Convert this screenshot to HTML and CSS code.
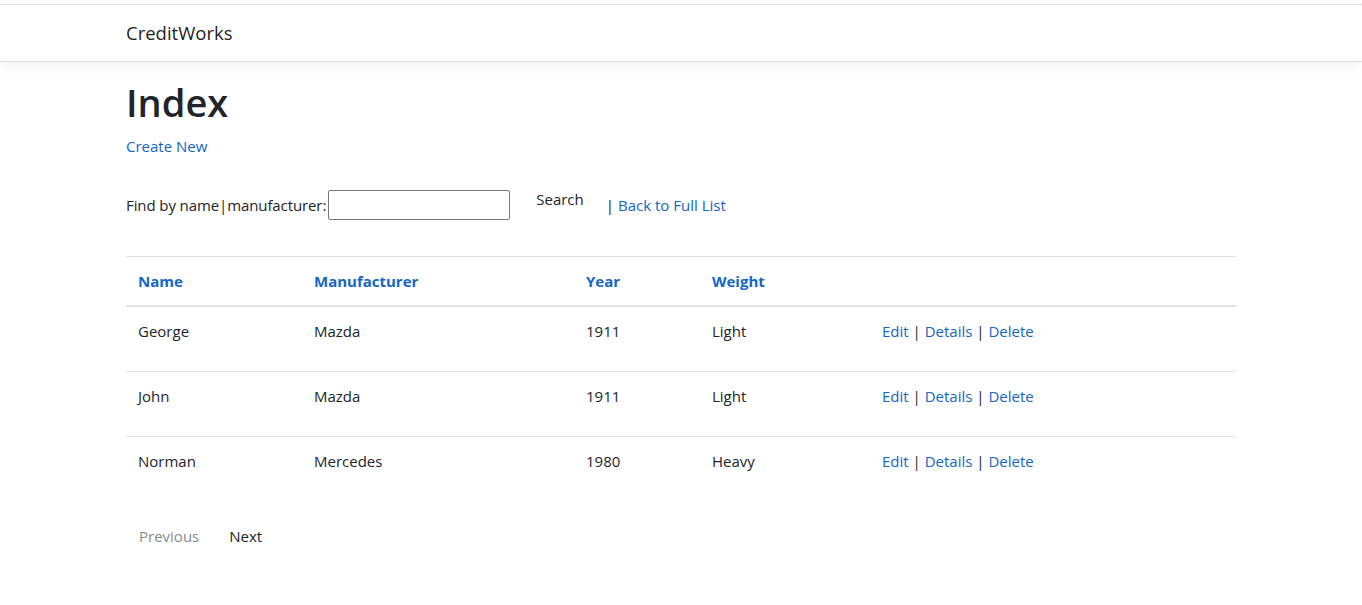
FILE: index.html
```html
<!DOCTYPE html>
<html lang="en">
<head>
<meta charset="utf-8">
<title>Index - CreditWorks</title>
<link rel="stylesheet" href="styles.css">
</head>
<body>
<header class="site-header">
  <nav class="navbar">
    <div class="container">
      <a class="brand" href="#">CreditWorks</a>
    </div>
  </nav>
</header>
<main class="container page">
  <h1 class="title">Index</h1>
  <p class="create"><a href="#">Create New</a></p>
  <form class="search">
    <span class="label">Find by name|manufacturer:</span>
    <input class="search-input" type="text">
    <button type="button" class="btn search-btn">Search</button>
    <span class="sep">|</span>
    <a href="#">Back to Full List</a>
  </form>
  <table class="table">
    <thead>
      <tr>
        <th class="c-name"><a href="#">Name</a></th>
        <th class="c-man"><a href="#">Manufacturer</a></th>
        <th class="c-year"><a href="#">Year</a></th>
        <th class="c-weight"><a href="#">Weight</a></th>
        <th class="c-act"></th>
      </tr>
    </thead>
    <tbody>
      <tr>
        <td>George</td><td>Mazda</td><td>1911</td><td>Light</td>
        <td><a href="#">Edit</a> | <a href="#">Details</a> | <a href="#">Delete</a></td>
      </tr>
      <tr>
        <td>John</td><td>Mazda</td><td>1911</td><td>Light</td>
        <td><a href="#">Edit</a> | <a href="#">Details</a> | <a href="#">Delete</a></td>
      </tr>
      <tr>
        <td>Norman</td><td>Mercedes</td><td>1980</td><td>Heavy</td>
        <td><a href="#">Edit</a> | <a href="#">Details</a> | <a href="#">Delete</a></td>
      </tr>
    </tbody>
  </table>
  <div class="pager">
    <a class="btn disabled" href="#">Previous</a>
    <a class="btn" href="#">Next</a>
  </div>
</main>
</body>
</html>
```
FILE: styles.css
```css
html, body {
  margin: 0;
  padding: 0;
}
body {
  font-family: "Open Sans", "Noto Sans", sans-serif;
  font-size: 15px;
  line-height: 24px;
  color: #212529;
  background: #fff;
}
a {
  color: #1466c8;
  text-decoration: none;
}
.container {
  width: 1110px;
  margin: 0 auto;
}
.site-header {
  margin-top: 4px;
  border-top: 1px solid #dee2e6;
}
.navbar {
  background: #fff;
  border-bottom: 1px solid #dee2e6;
  box-shadow: 0 4px 12px rgba(0, 0, 0, 0.05);
  padding: 8px 0;
}
.brand {
  display: inline-block;
  padding: 5px 0;
  font-size: 18.5px;
  line-height: 30px;
  color: rgba(0, 0, 0, 0.9);
}
.page {
  padding-top: 16px;
}
.title {
  margin: 0 0 8px;
  font-size: 38px;
  line-height: 48px;
  font-weight: 600;
}
.create {
  margin: 0 0 28px;
}
.search {
  display: flex;
  align-items: center;
  height: 38px;
  margin: 0 0 32px;
}
.label {
  margin-right: 2px;
  letter-spacing: -0.1px;
}
.search-input {
  width: 182px;
  height: 30px;
  box-sizing: border-box;
  border: 1px solid #767676;
  border-radius: 2px;
  padding: 1px 2px;
  font: inherit;
}
.btn {
  display: inline-block;
  padding: 7px 12px;
  border: 1px solid transparent;
  background: transparent;
  font: inherit;
  color: #212529;
}
.search-btn {
  margin-left: 13px;
  padding: 0 12px 12px;
  height: 38px;
  line-height: 24px;
}
.sep {
  margin-left: 9px;
  margin-right: 4px;
}
.table {
  width: 1110px;
  border-collapse: collapse;
  margin-bottom: 15px;
  table-layout: fixed;
}
.table th,
.table td {
  text-align: left;
  vertical-align: top;
  padding: 12px;
  border-top: 1px solid #dee2e6;
}
.table th {
  font-weight: 700;
  border-bottom: 2px solid #dee2e6;
}
.table td {
  padding-bottom: 28px;
}
.table tbody tr:first-child td {
  border-top: 0;
}
.c-name { width: 152px; }
.c-man { width: 248px; }
.c-year { width: 102px; }
.c-weight { width: 146px; }
.c-act { width: 342px; }
.pager {
  display: flex;
  gap: 4px;
}
.pager .disabled {
  opacity: 0.55;
}
```
